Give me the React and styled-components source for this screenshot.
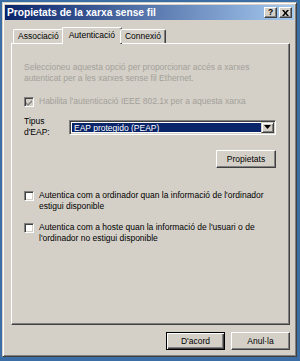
import React from 'react'
import styled, { createGlobalStyle } from 'styled-components'

const Global = createGlobalStyle`
  html, body { margin: 0; padding: 0; }
  body {
    background: #3a6ea5;
    font-family: "Liberation Sans", Arial, sans-serif;
    font-size: 8.5px;
    color: #000;
  }
`

const Desktop = styled.div`
  width: 300px;
  height: 361px;
  padding: 2px;
  box-sizing: border-box;
`

const Window = styled.div`
  width: 295px;
  height: 355px;
  box-sizing: border-box;
  background: #d4d0c8;
  border: 1px solid;
  border-color: #d4d0c8 #404040 #404040 #d4d0c8;
  box-shadow: inset 1px 1px #fff, inset -1px -1px #808080;
  padding: 2px;
  display: flex;
  flex-direction: column;
`

const TitleBar = styled.div`
  height: 15px;
  background: linear-gradient(to right, #0a246a, #a6caf0);
  display: flex;
  align-items: center;
  padding: 0 2px 0 2px;
`

const Title = styled.div`
  flex: 1;
  color: #fff;
  font-weight: bold;
  font-size: 10.2px;
  white-space: nowrap;
`

const CaptionButton = styled.div`
  width: 13px;
  height: 11px;
  box-sizing: border-box;
  background: #d4d0c8;
  border: 1px solid;
  border-color: #fff #404040 #404040 #fff;
  box-shadow: inset -1px -1px #808080;
  margin-left: ${p => (p.$gap ? '2px' : '0')};
  display: flex;
  align-items: center;
  justify-content: center;
  font-weight: bold;
  font-size: 8.5px;
  line-height: 1;
`

const Body = styled.div`
  flex: 1;
  display: flex;
  flex-direction: column;
  padding: 7px 5px 0 6px;
`

const TabRow = styled.div`
  display: flex;
  align-items: flex-end;
  padding-left: 2px;
  height: 16px;
  position: relative;
  z-index: 1;
`

const Tab = styled.div`
  box-sizing: border-box;
  height: ${p => (p.$active ? '17px' : '14px')};
  margin-bottom: ${p => (p.$active ? '-1px' : '0')};
  margin-left: ${p => (p.$active ? '-2px' : '0')};
  margin-right: ${p => (p.$active ? '-2px' : '0')};
  padding: ${p => (p.$active ? '2px 6px 0' : '1px 4px 0')};
  background: #d4d0c8;
  border: 1px solid;
  border-bottom: none;
  border-color: #fff #404040 #404040 #fff;
  border-radius: 2px 2px 0 0;
  box-shadow: inset -1px 0 #808080;
  white-space: nowrap;
  line-height: 11px;
`

const Panel = styled.div`
  width: 279px;
  height: 282px;
  box-sizing: border-box;
  border: 1px solid;
  border-color: #fff #404040 #404040 #fff;
  box-shadow: inset -1px -1px #808080;
  padding: 18px 13px 0 12px;
  display: flex;
  flex-direction: column;
  line-height: 11px;
`

const Hint = styled.div`
  color: #a3a099;
`

const CheckRow = styled.div`
  display: flex;
  align-items: flex-start;
  gap: 5px;
  margin-top: ${p => p.$top}px;
  color: ${p => (p.$disabled ? '#a3a099' : '#000')};
`

const Box = styled.div`
  width: 10px;
  height: 10px;
  flex: none;
  box-sizing: border-box;
  margin-top: 1px;
  background: ${p => (p.$disabled ? '#d4d0c8' : '#fff')};
  border: 1px solid;
  border-color: #808080 #fff #fff #808080;
  box-shadow: inset 1px 1px #404040, inset -1px -1px #d4d0c8;
  display: flex;
  align-items: center;
  justify-content: center;
`

const EapRow = styled.div`
  display: flex;
  align-items: center;
  margin-top: 9px;
`

const EapLabel = styled.div`
  width: 45px;
`

const Select = styled.div`
  flex: 1;
  height: 15px;
  box-sizing: border-box;
  background: #fff;
  border: 1px solid;
  border-color: #808080 #fff #fff #808080;
  box-shadow: inset 1px 1px #404040, inset -1px -1px #d4d0c8;
  padding: 2px;
  display: flex;
`

const SelectValue = styled.div`
  flex: 1;
  background: #0a246a;
  color: #fff;
  padding-left: 2px;
  line-height: 11px;
  white-space: nowrap;
`

const Arrow = styled.div`
  width: 13px;
  box-sizing: border-box;
  margin: -1px -1px -1px 0;
  background: #d4d0c8;
  border: 1px solid;
  border-color: #d4d0c8 #404040 #404040 #d4d0c8;
  box-shadow: inset 1px 1px #fff, inset -1px -1px #808080;
  display: flex;
  align-items: center;
  justify-content: center;
`

const Button = styled.div`
  width: ${p => p.$w || 59}px;
  height: 18px;
  box-sizing: border-box;
  background: #d4d0c8;
  border: 1px solid;
  border-color: ${p => (p.$default ? '#000' : '#fff #404040 #404040 #fff')};
  box-shadow: ${p =>
    p.$default
      ? 'inset 1px 1px #fff, inset -1px -1px #404040, inset -2px -2px #808080'
      : 'inset -1px -1px #808080'};
  display: flex;
  align-items: center;
  justify-content: center;
  white-space: nowrap;
`

const RightButton = styled.div`
  display: flex;
  justify-content: flex-end;
  margin-top: 12px;
`

const Footer = styled.div`
  display: flex;
  justify-content: flex-end;
  gap: 6px;
  margin-top: 7px;
  width: 279px;
`

const Check = ({ color }) => (
  <svg width="7" height="7" viewBox="0 0 7 7">
    <path d="M0 3 L2 5 L6 1 L6 3 L2 7 L0 5 Z" fill={color} />
  </svg>
)

const App = () => (
  <Desktop>
    <Global />
    <Window>
      <TitleBar>
        <Title>Propietats de la xarxa sense fil</Title>
        <CaptionButton>?</CaptionButton>
        <CaptionButton $gap>
          <svg width="7" height="6" viewBox="0 0 7 6">
            <path d="M0 0 L2 0 L3.5 2 L5 0 L7 0 L4.5 3 L7 6 L5 6 L3.5 4 L2 6 L0 6 L2.5 3 Z" fill="#000" />
          </svg>
        </CaptionButton>
      </TitleBar>
      <Body>
        <TabRow>
          <Tab>Associació</Tab>
          <Tab $active>Autenticació</Tab>
          <Tab>Connexió</Tab>
        </TabRow>
        <Panel>
          <Hint>
            Seleccioneu aquesta opció per proporcionar accés a xarxes
            <br />
            autenticat per a les xarxes sense fil Ethernet.
          </Hint>
          <CheckRow $top={12} $disabled>
            <Box $disabled>
              <Check color="#808080" />
            </Box>
            <span>Habilita l'autenticació IEEE 802.1x per a aquesta xarxa</span>
          </CheckRow>
          <EapRow>
            <EapLabel>
              Tipus
              <br />
              d'EAP:
            </EapLabel>
            <Select>
              <SelectValue>EAP protegido (PEAP)</SelectValue>
              <Arrow>
                <svg width="7" height="4" viewBox="0 0 7 4">
                  <path d="M0 0 L7 0 L3.5 4 Z" fill="#000" />
                </svg>
              </Arrow>
            </Select>
          </EapRow>
          <RightButton>
            <Button $w={60}>Propietats</Button>
          </RightButton>
          <CheckRow $top={22}>
            <Box />
            <span>
              Autentica com a ordinador quan la informació de l'ordinador estigui disponible
            </span>
          </CheckRow>
          <CheckRow $top={10}>
            <Box />
            <span>
              Autentica com a hoste quan la informació de l'usuari o de l'ordinador no estigui
              disponible
            </span>
          </CheckRow>
        </Panel>
        <Footer>
          <Button $default>D'acord</Button>
          <Button>Anul·la</Button>
        </Footer>
      </Body>
    </Window>
  </Desktop>
)

export default App
